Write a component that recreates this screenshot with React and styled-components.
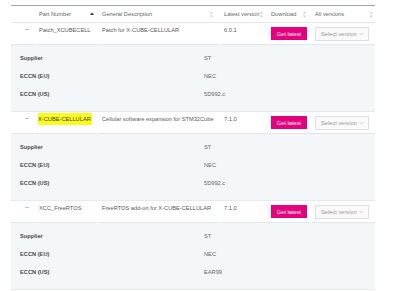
import React from "react";
import styled, { createGlobalStyle } from "styled-components";

const GlobalStyle = createGlobalStyle`
  body {
    margin: 0;
    background: #fff;
    font-family: "Liberation Sans", Arial, sans-serif;
  }
  * {
    box-sizing: border-box;
  }
`;

const COLS = "23px 62px 121px 46px 43px 64px";

const Page = styled.div`
  padding: 5px 0 0 11px;
  width: 375px;
`;

const Table = styled.div`
  border-top: 1px solid #9aa5b6;
`;

const HeaderRow = styled.div`
  display: grid;
  grid-template-columns: ${COLS};
  column-gap: 1px;
`;

const HeaderCell = styled.div`
  height: 17px;
  border-bottom: 1px solid #e2e5ea;
  display: flex;
  align-items: center;
  justify-content: space-between;
  padding: 0 ${(p) => p.$pr || 3}px 0 4px;
  font-size: 5.7px;
  color: #666;
  white-space: nowrap;
`;

const Row = styled.div`
  display: grid;
  grid-template-columns: ${COLS};
  column-gap: 1px;
  background: #fff;
`;

const Cell = styled.div`
  height: 22px;
  border-bottom: 1px solid #e2e5ea;
  padding: ${(p) => (p.$control ? "4px 0 0 4px" : "3px 0 0 4px")};
  font-size: 5.7px;
  line-height: 8px;
  color: #5a5a5a;
  white-space: nowrap;
`;

const ExpanderCell = styled(Cell)`
  padding: 6px 0 0 14px;
`;

const Dash = styled.span`
  display: block;
  width: 4px;
  height: 1px;
  background: #a3cbea;
`;

const Highlight = styled.span`
  background: #fbfb1e;
  color: #3a3a3a;
  padding: 3px 1px 3px 0;
  margin-left: -1px;
`;

const GetLatest = styled.button`
  width: 36px;
  height: 13px;
  border: none;
  padding: 0;
  background: #e5007e;
  color: #fff;
  font-family: inherit;
  font-size: 5.7px;
  display: block;
`;

const Select = styled.div`
  width: 54px;
  height: 14px;
  border: 1px solid #e0e0e0;
  background: #fafafa;
  display: flex;
  align-items: center;
  justify-content: space-between;
  padding: 0 4px 0 5px;
  font-size: 5.7px;
  color: #999;
`;

const Detail = styled.div`
  background: #f4f7fa;
  height: 67px;
  padding: 4px 0 0 9px;
  border-bottom: 1px solid #e6e9ee;
`;

const DetailRow = styled.div`
  display: grid;
  grid-template-columns: 184px 1fr;
  height: 18px;
  align-items: center;
  font-size: 5.7px;
`;

const Label = styled.span`
  font-weight: bold;
  color: #4a4a4a;
`;

const Value = styled.span`
  color: #666;
`;

const SortBoth = () => (
  <svg width="3" height="7" viewBox="0 0 3 7">
    <path d="M1.5 0.5 L3 2.5 H0 Z M1.5 6.5 L3 4.5 H0 Z" fill="#c4c8ce" />
  </svg>
);

const SortUp = () => (
  <svg width="4" height="4" viewBox="0 0 4 4">
    <path d="M2 0.5 L4 3 H0 Z" fill="#333" />
  </svg>
);

const Chevron = () => (
  <svg width="5" height="4" viewBox="0 0 5 4">
    <path d="M0.5 1 L2.5 3 L4.5 1" fill="none" stroke="#bbb" strokeWidth="0.6" />
  </svg>
);

const packages = [
  {
    name: "Patch_XCUBECELL",
    desc: "Patch for X-CUBE-CELLULAR",
    version: "6.0.1",
    eccnUs: "5D992.c",
  },
  {
    name: "X-CUBE-CELLULAR",
    desc: "Cellular software expansion for STM32Cube",
    version: "7.1.0",
    eccnUs: "5D992.c",
    marked: true,
  },
  {
    name: "XCC_FreeRTOS",
    desc: "FreeRTOS add-on for X-CUBE-CELLULAR",
    version: "7.1.0",
    eccnUs: "EAR99",
  },
];

export default function App() {
  return (
    <Page>
      <GlobalStyle />
      <Table>
        <HeaderRow>
          <HeaderCell />
          <HeaderCell $pr={3}>
            Part Number <SortUp />
          </HeaderCell>
          <HeaderCell $pr={6}>
            General Description <SortBoth />
          </HeaderCell>
          <HeaderCell $pr={3}>
            Latest version <SortBoth />
          </HeaderCell>
          <HeaderCell $pr={4}>
            Download <SortBoth />
          </HeaderCell>
          <HeaderCell $pr={2}>
            All versions <SortBoth />
          </HeaderCell>
        </HeaderRow>
        {packages.map((p) => (
          <React.Fragment key={p.name}>
            <Row>
              <ExpanderCell>
                <Dash />
              </ExpanderCell>
              <Cell>{p.marked ? <Highlight>{p.name}</Highlight> : p.name}</Cell>
              <Cell>{p.desc}</Cell>
              <Cell>{p.version}</Cell>
              <Cell $control>
                <GetLatest>Get latest</GetLatest>
              </Cell>
              <Cell $control>
                <Select>
                  Select version <Chevron />
                </Select>
              </Cell>
            </Row>
            <Detail>
              <DetailRow>
                <Label>Supplier</Label>
                <Value>ST</Value>
              </DetailRow>
              <DetailRow>
                <Label>ECCN (EU)</Label>
                <Value>NEC</Value>
              </DetailRow>
              <DetailRow>
                <Label>ECCN (US)</Label>
                <Value>{p.eccnUs}</Value>
              </DetailRow>
            </Detail>
          </React.Fragment>
        ))}
      </Table>
    </Page>
  );
}
